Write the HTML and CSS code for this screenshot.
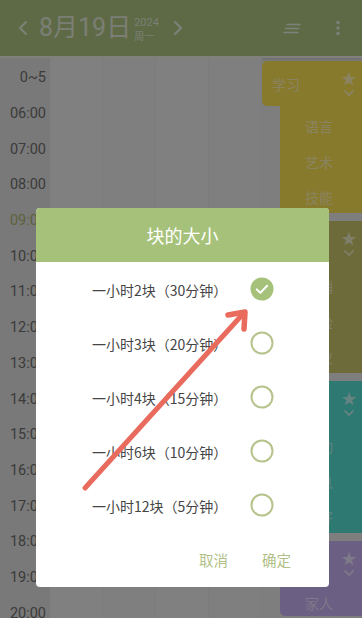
FILE: index.html
```html
<!DOCTYPE html>
<html lang="zh-CN">
<head>
<meta charset="utf-8">
<link rel="stylesheet" href="styles.css">
</head>
<body>
<div class="app">
  <header class="topbar">
    <svg class="nav-arrow" width="12" height="16" viewBox="0 0 12 16"><path d="M9 2 L3 8 L9 14" fill="none" stroke="currentColor" stroke-width="2" stroke-linecap="round" stroke-linejoin="round"/></svg>
    <div class="date">8月19日</div>
    <div class="date-sub"><span class="year">2024</span><span class="weekday">周一</span></div>
    <svg class="nav-arrow" width="12" height="16" viewBox="0 0 12 16"><path d="M3 2 L9 8 L3 14" fill="none" stroke="currentColor" stroke-width="2" stroke-linecap="round" stroke-linejoin="round"/></svg>
    <div class="spacer"></div>
    <svg class="icon-sort" width="18" height="12" viewBox="0 0 18 12"><path d="M4 1.5 H17 M2.5 5.5 H15.5 M1 9.5 H15" stroke="currentColor" stroke-width="1.6" stroke-linecap="round"/></svg>
    <svg class="icon-more" width="6" height="16" viewBox="0 0 6 16"><circle cx="3" cy="2.5" r="1.7" fill="currentColor"/><circle cx="3" cy="8" r="1.7" fill="currentColor"/><circle cx="3" cy="13.5" r="1.7" fill="currentColor"/></svg>
  </header>
  <main class="body">
    <div class="times">
      <div class="time">0~5</div>
      <div class="time">06:00</div>
      <div class="time">07:00</div>
      <div class="time">08:00</div>
      <div class="time now">09:00</div>
      <div class="time">10:00</div>
      <div class="time">11:00</div>
      <div class="time">12:00</div>
      <div class="time">13:00</div>
      <div class="time">14:00</div>
      <div class="time">15:00</div>
      <div class="time">16:00</div>
      <div class="time">17:00</div>
      <div class="time">18:00</div>
      <div class="time">19:00</div>
      <div class="time">20:00</div>
    </div>
    <div class="grid">
      <div class="col"></div><div class="col"></div><div class="col"></div><div class="col"></div>
    </div>
    <div class="side">
      <div class="card c-study">
        <div class="card-head"><span class="card-name">学习</span>
          <span class="card-icons"><span class="star">★</span><svg class="chev" width="12" height="8" viewBox="0 0 12 8"><path d="M1.5 1.5 L6 6 L10.5 1.5" fill="none" stroke="currentColor" stroke-width="1.6"/></svg></span></div>
        <div class="card-body"><div class="item">语言</div><div class="item">艺术</div><div class="item">技能</div></div>
      </div>
      <div class="card c-work">
        <div class="card-head"><span class="card-name">工作</span>
          <span class="card-icons"><span class="star">★</span><svg class="chev" width="12" height="8" viewBox="0 0 12 8"><path d="M1.5 1.5 L6 6 L10.5 1.5" fill="none" stroke="currentColor" stroke-width="1.6"/></svg></span></div>
        <div class="card-body"><div class="item">报销</div><div class="item">体检</div><div class="item">礼仪</div></div>
      </div>
      <div class="card c-health">
        <div class="card-head"><span class="card-name">健康</span>
          <span class="card-icons"><span class="star">★</span><svg class="chev" width="12" height="8" viewBox="0 0 12 8"><path d="M1.5 1.5 L6 6 L10.5 1.5" fill="none" stroke="currentColor" stroke-width="1.6"/></svg></span></div>
        <div class="card-body"><div class="item">运动</div><div class="item">休息</div><div class="item">爱好</div></div>
      </div>
      <div class="card c-family">
        <div class="card-head"><span class="card-icons"><span class="star">★</span><svg class="chev" width="12" height="8" viewBox="0 0 12 8"><path d="M1.5 1.5 L6 6 L10.5 1.5" fill="none" stroke="currentColor" stroke-width="1.6"/></svg></span></div>
        <div class="card-body"><div class="item">家人</div></div>
      </div>
    </div>
  </main>
</div>

<div class="backdrop"></div>

<div class="dialog">
  <div class="dialog-title">块的大小</div>
  <div class="options">
    <div class="option"><span class="opt-text">一小时2块（30分钟）</span>
      <svg class="radio" width="24" height="24" viewBox="0 0 24 24"><circle cx="12" cy="12" r="11.5" fill="#a6c27a"/><path d="M6.8 12.4 L10.4 15.8 L17.2 8.8" fill="none" stroke="#fff" stroke-width="2" stroke-linecap="round" stroke-linejoin="round"/></svg></div>
    <div class="option"><span class="opt-text">一小时3块（20分钟）</span>
      <svg class="radio" width="24" height="24" viewBox="0 0 24 24"><circle cx="12" cy="12" r="10.5" fill="none" stroke="#b6c38c" stroke-width="2"/></svg></div>
    <div class="option"><span class="opt-text">一小时4块（15分钟）</span>
      <svg class="radio" width="24" height="24" viewBox="0 0 24 24"><circle cx="12" cy="12" r="10.5" fill="none" stroke="#b6c38c" stroke-width="2"/></svg></div>
    <div class="option"><span class="opt-text">一小时6块（10分钟）</span>
      <svg class="radio" width="24" height="24" viewBox="0 0 24 24"><circle cx="12" cy="12" r="10.5" fill="none" stroke="#b6c38c" stroke-width="2"/></svg></div>
    <div class="option"><span class="opt-text">一小时12块（5分钟）</span>
      <svg class="radio" width="24" height="24" viewBox="0 0 24 24"><circle cx="12" cy="12" r="10.5" fill="none" stroke="#b6c38c" stroke-width="2"/></svg></div>
  </div>
  <div class="actions">
    <span class="btn">取消</span>
    <span class="btn">确定</span>
  </div>
</div>

<svg class="annot" width="362" height="618" viewBox="0 0 362 618">
  <path d="M85 488 L242 315" fill="none" stroke="#e86b5e" stroke-width="5" stroke-linecap="round"/>
  <path d="M228 315 L245 312 L244 329" fill="none" stroke="#e86b5e" stroke-width="5.5" stroke-linecap="round" stroke-linejoin="round"/>
</svg>
</body>
</html>
```

FILE: styles.css
```css
* { box-sizing: border-box; }
html, body {
  margin: 0;
  padding: 0;
  width: 362px;
  height: 618px;
  overflow: hidden;
  font-family: "Noto Sans CJK SC", "Noto Sans", Roboto, sans-serif;
}
body { position: relative; background: #e6e6e6; }

.app { width: 362px; height: 618px; display: flex; flex-direction: column; overflow: hidden; }

.topbar {
  height: 58px;
  flex: none;
  background: #abc27f;
  display: flex;
  align-items: center;
  padding: 0 16px 0 17px;
  color: #e2e8d6;
  box-shadow: 0 2px 2px rgba(0,0,0,0.12);
  border-bottom: 2px solid #e9ece3;
}
.nav-arrow { flex: none; color: #e6ebdc; }
.date {
  font-family: Roboto, "Noto Sans CJK SC", sans-serif;
  font-size: 25px;
  line-height: 30px;
  margin: 0 3px 0 10px;
  color: #e0e6d4;
}
.date-sub { display: flex; flex-direction: column; width: 30px; margin-right: 8px; margin-top: 2px; }
.year { font-family: Roboto, sans-serif; font-size: 11px; line-height: 12px; color: #dfe5d3; }
.weekday { font-size: 10px; line-height: 13px; color: #dfe5d3; }
.spacer { flex: 1; }
.icon-sort { color: #e6ebdc; margin-right: 34px; margin-top: 1px; }
.icon-more { color: #e6ebdc; margin-right: 5px; }

.body { flex: 1; display: flex; min-height: 0; overflow: hidden; }
.times { width: 50px; flex: none; background: #dcdcdc; padding-top: 2px; }
.time {
  height: 35.7px;
  display: flex;
  align-items: center;
  justify-content: flex-end;
  padding-right: 4px;
  font-family: Roboto, sans-serif;
  font-size: 14.5px;
  color: #6c6c6c;
}
.time.now { color: #a9b36c; }

.grid { flex: 1; display: flex; background: #e8e8e8; }
.col { flex: 1; border-right: 1px solid #e2e2e2; }
.col:nth-child(odd) { background: #eaeaea; }

.side { width: 100px; flex: none; display: flex; flex-direction: column; gap: 8px; padding-top: 3px; }
.card { display: flex; flex-direction: column; flex: none; }
.card-head {
  height: 45px;
  border-radius: 5px 0 0 5px;
  display: flex;
  align-items: center;
  justify-content: space-between;
  padding: 0 6px 0 10px;
}
.c-family .card-head { justify-content: flex-end; }
.card-name { font-size: 14px; color: rgba(255,255,255,0.55); margin-top: 1px; }
.card-icons { display: flex; flex-direction: column; align-items: center; width: 14px; }
.star { font-size: 15px; line-height: 15px; color: rgba(255,255,255,0.62); }
.chev { color: rgba(255,255,255,0.62); margin-top: 4px; }
.card-body { margin-left: 18px; border-radius: 0 0 0 5px; }
.item {
  height: 35.7px;
  display: flex;
  align-items: center;
  padding-left: 25px;
  padding-top: 4px;
  font-size: 14px;
  color: rgba(255,255,255,0.55);
}
.c-family .item { height: 30px; }
.c-study .card-head, .c-study .card-body { background: #f8de52; }
.c-work .card-head, .c-work .card-body { background: #c8c46b; }
.c-health .card-head, .c-health .card-body { background: #55dcd0; }
.c-family .card-head, .c-family .card-body { background: #c5aef0; }

.backdrop { position: absolute; inset: 0; background: rgba(0,0,0,0.45); }

.dialog {
  position: absolute;
  left: 36px;
  top: 208px;
  width: 293px;
  height: 379px;
  background: #fff;
  border-radius: 4px;
  overflow: hidden;
  display: flex;
  flex-direction: column;
}
.dialog-title {
  height: 54px;
  flex: none;
  background: #a6c27a;
  color: #fff;
  font-size: 18px;
  display: flex;
  align-items: center;
  justify-content: center;
}
.options { display: flex; flex-direction: column; }
.option {
  height: 54px;
  display: flex;
  align-items: center;
  padding: 0 55px 0 56px;
}
.opt-text { flex: 1; font-size: 14px; color: #454545; margin-top: 1px; }
.radio { flex: none; }
.actions {
  flex: 1;
  display: flex;
  justify-content: flex-end;
  align-items: center;
  gap: 34px;
  padding-right: 38px;
}
.btn { font-size: 14.5px; color: #b1bf87; }

.annot { position: absolute; left: 0; top: 0; pointer-events: none; }
```
